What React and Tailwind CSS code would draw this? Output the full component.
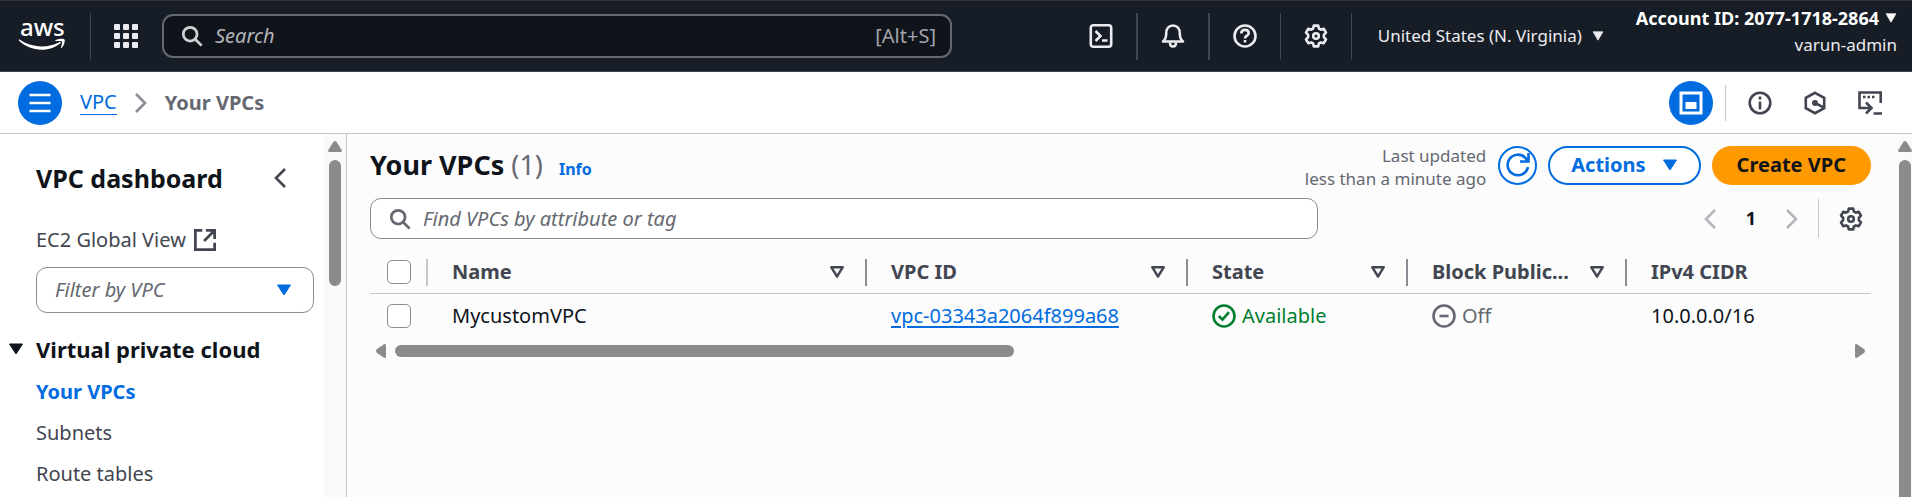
function Svg({ children, className = "size-6", sw = 2 }) {
  return (
    <svg viewBox="0 0 24 24" className={className + " shrink-0"} fill="none" stroke="currentColor" strokeWidth={sw} aria-hidden="true">
      {children}
    </svg>
  );
}

const Search = ({ className }) => (
  <Svg className={className} sw={3}>
    <circle cx="10" cy="10" r="7.5" />
    <path d="m15.5 15.5 7 7" />
  </Svg>
);

const Gear = () => (
  <Svg sw={2.6}>
    <path strokeLinejoin="round" d="M9.8 1.6h4.4l.7 2.9 2 1.1 2.9-.8 2.2 3.8-2.1 2.1v2.6l2.1 2.1-2.2 3.8-2.9-.8-2 1.1-.7 2.9H9.8l-.7-2.9-2-1.1-2.9.8L2 15.4l2.1-2.1v-2.6L2 8.6l2.2-3.8 2.9.8 2-1.1z" />
    <circle cx="12" cy="12" r="2.8" />
  </Svg>
);

const Caret = ({ size = "h-3 w-4", className = "" }) => (
  <svg viewBox="0 0 16 12" className={"shrink-0 " + size + " " + className} fill="currentColor" stroke="currentColor" strokeLinejoin="round" preserveAspectRatio="none" aria-hidden="true">
    <path d="M1.5 1h13L8 11z" />
  </svg>
);

const SortIcon = () => (
  <svg viewBox="0 0 16 14" className="h-3.5 w-4 shrink-0" fill="none" stroke="currentColor" strokeWidth="2.4" strokeLinejoin="round" aria-hidden="true">
    <path d="M2.2 2.2h11.6L8 11.5z" />
  </svg>
);

const Chevron = ({ dir, className = "" }) => (
  <svg viewBox="0 0 12 20" className={"h-5 w-3 shrink-0 " + className} fill="none" stroke="currentColor" strokeWidth="2.6" aria-hidden="true">
    <path d={dir === "left" ? "M11 1 2 10l9 9" : "m1 1 9 9-9 9"} />
  </svg>
);

const Separator = ({ width = "w-px", className = "" }) => (
  <span className={"h-[47px] shrink-0 bg-[#424650] " + width + " " + className} />
);

function TopBar() {
  return (
    <header className="flex h-[72px] items-center border-t border-b border-t-[#333] border-b-[#424650] bg-[#161d26] pr-[15px] text-[#ebebf0]">
      <a href="#home" aria-label="AWS home" className="ml-[18px] text-white">
        <svg viewBox="0 -14 48 58" className="h-[58px] w-12" aria-hidden="true">
          <text x="2" y="15" fontFamily="Noto Sans, sans-serif" fontSize="24" fontWeight="500" fill="currentColor">aws</text>
          <path fill="currentColor" d="M1.6 18.6C8 23 15 25.4 23.5 25.4c6.5 0 13-1.6 18.2-4.5.9-.4 1.6.6.8 1.3C38 26 31 28.7 23.8 28.7 14.8 28.7 7 25.2 1 19.7c-.6-.6 0-1.5.6-1.1z" />
          <path fill="currentColor" d="M37.5 19.3c2.5-1.7 7.800-2 8.9-.9 1 1-.2 6.3-2.9 8.5-.4.3-.8.1-.6-.4.6-1.5 1.7-5 1.1-5.9-.7-.8-4.300-.6-6-.4-.7.1-.9-.5-.5-.9z" />
        </svg>
      </a>
      <Separator className="ml-6" />
      <button type="button" aria-label="Services" className="ml-[23px]">
        <svg viewBox="0 0 24 24" className="size-6" fill="currentColor" aria-hidden="true">
          {[0, 9, 18].map((y) => [0, 9, 18].map((x) => <rect key={x + "-" + y} x={x} y={y} width="6" height="6" rx="1" />))}
        </svg>
      </button>
      <label className="ml-6 flex h-11 max-w-[790px] min-w-0 flex-1 items-center rounded-[11px] border-2 border-[#656871] bg-[#0f141a] pr-3.5 pl-[17px] text-[20px]">
        <Search className="size-[22px] text-[#d0d0d4]" />
        <input type="text" aria-label="Search" placeholder="Search" className="ml-3 min-w-0 flex-1 bg-transparent outline-none placeholder:text-[#b4b4bb] placeholder:italic" />
        <span className="text-[#a4a4ad]">[Alt+S]</span>
      </label>
      <div className="ml-auto flex items-center">
        <button type="button" aria-label="CloudShell" className="mr-[23px]">
          <Svg sw={2.6}>
            <rect x="1.8" y="1.3" width="20.4" height="21.4" rx="2.5" />
            <path d="m6.5 7 5 5-5 5M13 16.5h5.5" />
          </Svg>
        </button>
        <Separator width="w-0.5" />
        <button type="button" aria-label="Notifications" className="mx-[23px]">
          <Svg sw={2.6}>
            <path strokeLinejoin="round" d="M2 17.5c2.5-2 3.2-4 3.2-8C5.2 4.5 8 1.5 12 1.5s6.8 3 6.8 8c0 4 .7 6 3.2 8z" />
            <path d="M9 18.5c0 2.5 1 4 3 4s3-1.5 3-4" />
          </Svg>
        </button>
        <Separator width="w-0.5" />
        <button type="button" aria-label="Help" className="mx-[23px]">
          <Svg sw={2.6}>
            <circle cx="12" cy="12" r="10.5" />
            <path d="M8.3 9.5C8.3 7 9.8 5.9 12 5.9s3.7 1.2 3.7 3.3c0 2.5-3.7 2.5-3.7 5.3M12 16v2.6" />
          </Svg>
        </button>
        <Separator />
        <button type="button" aria-label="Settings" className="mx-[23px]"><Gear /></button>
        <Separator />
        <button type="button" className="ml-[26px] flex items-center gap-2.5 text-[17px] whitespace-nowrap">
          United States (N. Virginia)
          <Caret size="h-2.5 w-3" />
        </button>
      </div>
      <button type="button" className="ml-8 flex flex-col items-end text-[17px] leading-7 whitespace-nowrap">
        <span className="flex items-center gap-1.5 text-[18px] leading-[26px] font-bold text-white">
          Account ID: 2077-1718-2864
          <Caret size="h-2.5 w-3" />
        </span>
        <span className="pb-2">varun-admin</span>
      </button>
    </header>
  );
}

function Breadcrumbs() {
  return (
    <div className="flex h-[62px] items-center border-b border-[#c6c6cd] bg-white pr-[30px] pl-[18px] text-[#424650]">
      <button type="button" aria-label="Navigation" className="grid size-11 place-items-center rounded-full bg-[#006ce0] text-white">
        <Svg sw={2.6}><path d="M1.5 4h21M1.5 12h21M1.5 20h21" /></Svg>
      </button>
      <nav aria-label="Breadcrumb" className="ml-[18px] flex items-center text-[20px]">
        <a href="#vpc" className="border-b border-[#006ce0] leading-6 text-[#006ce0]">VPC</a>
        <Chevron dir="right" className="ml-[18px] text-[#8c8c94]" />
        <span className="ml-[18px] font-bold text-[#656871]">Your VPCs</span>
      </nav>
      <button type="button" aria-label="Split panel" className="ml-auto grid size-11 place-items-center rounded-full bg-[#006ce0] text-white">
        <Svg sw={3}>
          <rect x="2" y="2" width="20" height="20" />
          <rect x="6.5" y="11" width="11" height="7" fill="currentColor" stroke="none" />
        </Svg>
      </button>
      <span className="mx-3 h-9 w-px bg-[#c6c6cd]" />
      <div className="ml-[10px] flex gap-[31px]">
        <button type="button" aria-label="Information">
          <Svg sw={2.6}><circle cx="12" cy="12" r="10.3" /><path d="M12 5.5v3M12 10.5v8" /></Svg>
        </button>
        <button type="button" aria-label="Diagnostics">
          <Svg sw={2.6}><path d="M12 1.8 21.2 6.8v10.4L12 22.2l-9.2-5V6.8z" /><path d="m12 12 9.5 4.8" /><circle cx="12" cy="12" r="3" fill="currentColor" stroke="none" /></Svg>
        </button>
        <button type="button" aria-label="Command panel">
          <Svg sw={2.6}><path d="M22.7 12V1.500H1.500V17H12M8 11.500l5.500 5.500L8 22.500M15.500 22.500H24M5 6h2.500M9.500 6H12M14 6h2.500" /></Svg>
        </button>
      </div>
    </div>
  );
}

function ScrollRail({ width, thumb }) {
  return (
    <div className={"flex shrink-0 flex-col items-center bg-[#fafafa] " + width} aria-hidden="true">
      <svg viewBox="0 0 14 11" className="mt-[7px] h-[11px] w-3.5 shrink-0" fill="#8b8b8b"><path d="M7 0q1 0 2 1.500l5 8q0 1.500-1.500 1.500h-11Q0 11 0 9.500l5-8Q6 0 7 0z" /></svg>
      <span className={"mt-2 w-3 bg-[#8b8b8b] " + thumb} />
    </div>
  );
}

function Sidebar() {
  return (
    <aside className="flex w-[347px] shrink-0 border-r border-[#c6c6cd] bg-white">
      <div className="flex-1 pr-2.5 pl-9 text-[#424650]">
        <div className="mt-[29px] flex items-center justify-between pr-7">
          <h2 className="text-[25px] leading-[30px] font-bold text-[#0f141a]">VPC dashboard</h2>
          <button type="button" aria-label="Collapse navigation"><Chevron dir="left" /></button>
        </div>
        <a href="#ec2" className="mt-[33px] flex items-center gap-2 text-[20px] leading-7">
          EC2 Global View
          <Svg className="size-[22px]" sw={3}><path d="M9 1.500H1.500v21h21V15M13 1.500h9.500V11M22 2 11 13" /></Svg>
        </a>
        <button type="button" className="mt-[13px] flex h-[46px] w-full items-center justify-between rounded-[11px] border border-[#8c8c94] pr-[21px] pl-[18px] text-[20px] text-[#656871] italic">
          Filter by VPC
          <Caret className="text-[#006ce0]" />
        </button>
        <button type="button" className="mt-[21px] -ml-7 flex items-center gap-3 text-[22px] leading-[30px] font-bold text-[#0f141a]">
          <Caret />
          Virtual private cloud
        </button>
        <nav aria-label="Virtual private cloud" className="mt-[7px] flex flex-col text-[20px] leading-[41px]">
          <a href="#vpcs" className="font-bold text-[#006ce0]">Your VPCs</a>
          <a href="#subnets">Subnets</a>
          <a href="#routes">Route tables</a>
        </nav>
      </div>
      <ScrollRail width="w-[22px]" thumb="h-[126px] rounded-full" />
    </aside>
  );
}

const check = "block size-6 appearance-none rounded-[5px] border border-[#8c8c94] bg-white";

function HeadCell({ label, last }) {
  return (
    <th scope="col" className="p-0 pb-[7px] text-left align-bottom">
      <div className={"flex h-[27px] items-center justify-between pr-5 pl-6 " + (last ? "" : "border-r-2 border-[#8c8c94]")}>
        <span className="truncate">{label}</span>
        {!last && <SortIcon />}
      </div>
    </th>
  );
}

function VpcTable() {
  return (
    <table className="w-full table-fixed border-collapse text-[20px]">
      <colgroup>
        <col className="w-[58px]" />
        <col className="w-[439px]" />
        <col className="w-[321px]" />
        <col className="w-[220px]" />
        <col className="w-[219px]" />
        <col />
      </colgroup>
      <thead>
        <tr className="h-[54px] border-b border-[#c6c6cd] text-[#424650]">
          <th scope="col" className="p-0 pb-[7px] align-bottom">
            <div className="flex h-[27px] items-center border-r-2 border-[#c6c6cd] pl-[17px]">
              <input type="checkbox" aria-label="Select all" className={check} />
            </div>
          </th>
          <HeadCell label="Name" />
          <HeadCell label="VPC ID" />
          <HeadCell label="State" />
          <HeadCell label="Block Public..." />
          <HeadCell label="IPv4 CIDR" last />
        </tr>
      </thead>
      <tbody>
        <tr className="h-[45px] text-[#0f141a]">
          <td className="p-0 pl-[17px]"><input type="checkbox" aria-label="Select MycustomVPC" className={check} /></td>
          <td className="p-0 pl-6">MycustomVPC</td>
          <td className="p-0 pl-6"><a href="#vpc-03343a2064f899a68" className="text-[#006ce0] underline decoration-2 underline-offset-3">vpc-03343a2064f899a68</a></td>
          <td className="p-0 pl-6">
            <span className="flex items-center gap-1.5 text-[#00802f]">
              <Svg sw={2.6}><circle cx="12" cy="12" r="10.5" /><path d="m6.8 12 3.7 3.7 6.5-7.5" /></Svg>
              Available
            </span>
          </td>
          <td className="p-0 pl-6">
            <span className="flex items-center gap-1.5 text-[#656871]">
              <Svg sw={2.6}><circle cx="12" cy="12" r="10.5" /><path d="M7.5 12h9" /></Svg>
              Off
            </span>
          </td>
          <td className="p-0 pl-6">10.0.0.0/16</td>
        </tr>
      </tbody>
    </table>
  );
}

function Main() {
  return (
    <main className="min-w-0 flex-1 bg-[#fcfcfd] pr-[27px] pl-[23px]">
      <div className="flex h-16 items-center pb-0.5">
        <h1 className="text-[27px] leading-8 font-bold text-[#0f141a]">
          Your VPCs <span className="font-normal text-[#656871]">(1)</span>
        </h1>
        <a href="#info" className="mt-2 ml-4 text-[16px] font-bold text-[#006ce0]">Info</a>
        <p className="mt-1 ml-auto text-right text-[17px] leading-[23px] text-[#656871]">
          Last updated<br />less than a minute ago
        </p>
        <button type="button" aria-label="Refresh" className="ml-3 grid size-[39px] place-items-center rounded-full border-2 border-[#006ce0] bg-white text-[#006ce0]">
          <Svg sw={2.6}><path d="M22 14A10.3 10.3 0 1 1 19.5 5l2.5 3M22.5 0v8.5H14" /></Svg>
        </button>
        <button type="button" className="ml-[11px] flex h-[39px] items-center gap-4 rounded-full border-2 border-[#006ce0] bg-white px-[21px] text-[20px] font-bold text-[#006ce0]">
          Actions
          <Caret />
        </button>
        <button type="button" className="ml-[11px] h-[39px] rounded-full bg-[#ff9900] px-[25px] text-[20px] font-bold text-[#0f141a]">Create VPC</button>
      </div>
      <div className="flex h-[41px] items-center">
        <label className="flex h-full w-[948px] items-center rounded-[11px] border border-[#8c8c94] bg-white pl-[18px] text-[#656871]">
          <Search className="size-[22px]" />
          <input type="text" aria-label="Find VPCs" placeholder="Find VPCs by attribute or tag" className="ml-3 flex-1 bg-transparent text-[20px] outline-none placeholder:text-[#656871] placeholder:italic" />
        </label>
        <div className="ml-auto flex h-full items-center pr-2 text-[#424650]">
          <button type="button" aria-label="Previous page" className="text-[#b4b4bb]"><Chevron dir="left" /></button>
          <button type="button" className="w-[70px] text-[18px] font-bold text-[#0f141a]">1</button>
          <button type="button" aria-label="Next page" className="text-[#b4b4bb]"><Chevron dir="right" /></button>
          <span className="mx-5 h-[39px] w-px bg-[#c6c6cd]" />
          <button type="button" aria-label="Preferences"><Gear /></button>
        </div>
      </div>
      <VpcTable />
      <div className="mt-1.5 flex items-center px-1.5" aria-hidden="true">
        <svg viewBox="0 0 10 14" className="h-3.5 w-2.5" fill="#8b8b8b"><path d="M0 7q0-1 1-2l7-4.700Q10-.5 10 1.500v11q0 2-2 1.200L1 9Q0 8 0 7z" /></svg>
        <span className="ml-[9px] h-3 w-[619px] rounded-full bg-[#8b8b8b]" />
        <svg viewBox="0 0 10 14" className="ml-auto h-3.5 w-2.5" fill="#8b8b8b"><path d="M10 7q0-1-1-2L2 .3Q0-.5 0 1.500v11q0 2 2 1.200L9 9q1-1 1-2z" /></svg>
      </div>
    </main>
  );
}

export default function App() {
  return (
    <div className="flex h-screen flex-col overflow-hidden bg-[#fcfcfd] font-['Noto_Sans',sans-serif]">
      <TopBar />
      <Breadcrumbs />
      <div className="flex min-h-0 flex-1 overflow-hidden">
        <Sidebar />
        <Main />
        <ScrollRail width="w-3.5" thumb="flex-1 rounded-t-full" />
      </div>
    </div>
  );
}
